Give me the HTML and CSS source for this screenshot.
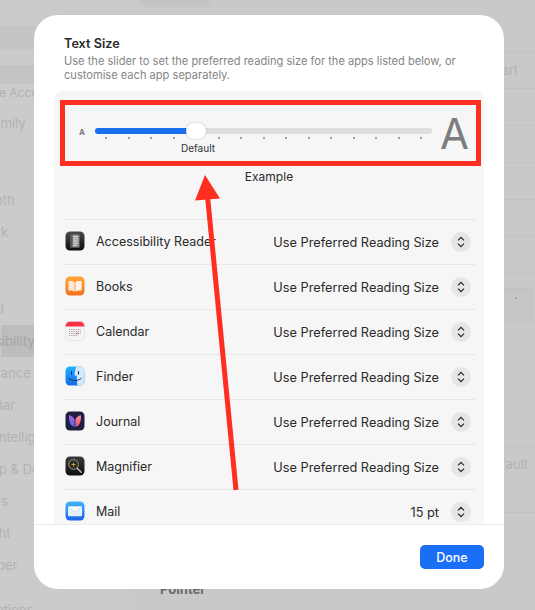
FILE: index.html
```html
<!DOCTYPE html>
<html lang="en">
<head>
<meta charset="utf-8">
<title>Text Size</title>
<link rel="stylesheet" href="styles.css">
</head>
<body>
    <!-- dimmed settings window behind the sheet -->
    <div class="backdrop">
        <div class="sidebar">
            <div class="search"></div>
            <div class="account"></div>
            <div class="account-name">Apple Account</div>
            <div class="family">Family</div>
            <div class="side-item">Wi-Fi</div>
            <div class="side-item">Bluetooth</div>
            <div class="side-item">Network</div>
            <div class="side-item">Battery</div>
            <div class="side-item group-start">General</div>
            <div class="side-item selected">Accessibility</div>
            <div class="side-item">Appearance</div>
            <div class="side-item">Menu Bar</div>
            <div class="side-item">Apple Intelligence</div>
            <div class="side-item">Desktop &amp; Dock</div>
            <div class="side-item">Displays</div>
            <div class="side-item">Spotlight</div>
            <div class="side-item">Wallpaper</div>
            <div class="side-item group-start">Notifications</div>
        </div>
        <div class="main">
            <div class="notch"></div>
            <div class="bg-rows">
                <div class="bg-row"></div>
                <div class="bg-row">Restart</div>
                <div class="bg-row"></div>
                <div class="bg-row"></div>
                <div class="bg-row"></div>
                <div class="bg-row"></div>
                <div class="bg-row"></div>
            </div>
            <div class="bg-band"></div>
            <div class="bg-slider"><span class="bg-dot"></span></div>
            <div class="bg-row-tall">Default</div>
            <div class="bg-heading">Pointer</div>
        </div>
    </div>

    <div class="sheet">
        <div class="sheet-head">
            <h1 class="title">Text Size</h1>
            <p class="desc">Use the slider to set the preferred reading size for the apps listed below, or customise each app separately.</p>
        </div>

        <div class="panel">
            <div class="size-row">
                <span class="a-small">A</span>
                <div class="slider">
                    <div class="track"><div class="fill"></div></div>
                    <div class="knob"></div>
                    <div class="ticks">
                        <i></i><i></i><i></i><i></i><i></i><i></i><i></i><i></i><i></i><i></i><i></i><i></i><i></i><i></i><i></i>
                    </div>
                    <div class="slider-label">Default</div>
                </div>
                <span class="a-big">A</span>
            </div>
            <div class="example">Example</div>

            <div class="app-list">
                <div class="app-row">
                    <svg class="app-icon" viewBox="0 0 20 20">
                        <defs><linearGradient id="readerBg" x1="0" y1="0" x2="0" y2="1"><stop offset="0" stop-color="#4a4a4a"/><stop offset="1" stop-color="#0c0c0c"/></linearGradient></defs>
                        <rect x="0.5" y="0.5" width="19" height="19" rx="4.5" fill="url(#readerBg)"/>
                        <path d="M5.5 3.5h9v13h-9z" fill="#8b8b8b"/>
                        <path d="M5.5 3.5h2v13h-2z" fill="#555"/>
                        <path d="M8 5.5h5M8 7.3h5M8 9.1h5M8 10.9h5M8 12.7h5M8 14.5h3.5" stroke="#e2e2e2" stroke-width="0.9"/>
                    </svg>
                    <span class="app-name">Accessibility Reader</span>
                    <span class="app-value">Use Preferred Reading Size</span>
                    <span class="stepper"><svg viewBox="0 0 20 20"><path d="M7 8.4 10 5.4l3 3M7 11.6l3 3 3-3"/></svg></span>
                </div>
                <div class="app-row">
                    <svg class="app-icon" viewBox="0 0 20 20">
                        <defs><linearGradient id="booksBg" x1="0" y1="0" x2="0" y2="1"><stop offset="0" stop-color="#ffa83a"/><stop offset="1" stop-color="#f5701c"/></linearGradient></defs>
                        <rect x="0.5" y="0.5" width="19" height="19" rx="4.5" fill="url(#booksBg)"/>
                        <path d="M9.6 6.2C8 4.9 5.6 4.8 3.4 5.2v9.4c2.3-.4 4.5-.3 6.2 1z" fill="#ffe9d6"/>
                        <path d="M10.4 6.2c1.6-1.3 4-1.4 6.2-1v9.4c-2.3-.4-4.5-.3-6.2 1z" fill="#fff4ea"/>
                    </svg>
                    <span class="app-name">Books</span>
                    <span class="app-value">Use Preferred Reading Size</span>
                    <span class="stepper"><svg viewBox="0 0 20 20"><path d="M7 8.4 10 5.4l3 3M7 11.6l3 3 3-3"/></svg></span>
                </div>
                <div class="app-row">
                    <svg class="app-icon" viewBox="0 0 20 20">
                        <defs><clipPath id="calClip"><rect x="0.5" y="0.5" width="19" height="19" rx="4.5"/></clipPath></defs>
                        <g clip-path="url(#calClip)">
                            <rect width="20" height="20" fill="#f4f4f4"/>
                            <rect width="20" height="5.5" fill="#fb2f45"/>
                            <path d="M4 8.5h12M4 10.5h12M4 12.5h12M4 14.5h9" stroke="#8a8a8a" stroke-width="0.9" stroke-dasharray="0.9 0.9"/>
                            <rect x="11.5" y="12" width="2" height="1" fill="#f0404c"/>
                        </g>
                        <rect x="0.5" y="0.5" width="19" height="19" rx="4.5" fill="none" stroke="#d8d8d8" stroke-width="0.5"/>
                    </svg>
                    <span class="app-name">Calendar</span>
                    <span class="app-value">Use Preferred Reading Size</span>
                    <span class="stepper"><svg viewBox="0 0 20 20"><path d="M7 8.4 10 5.4l3 3M7 11.6l3 3 3-3"/></svg></span>
                </div>
                <div class="app-row">
                    <svg class="app-icon" viewBox="0 0 20 20">
                        <defs>
                            <linearGradient id="finderBg" x1="0" y1="0" x2="0" y2="1"><stop offset="0" stop-color="#1cb8fb"/><stop offset="1" stop-color="#1467ec"/></linearGradient>
                            <clipPath id="finderClip"><rect x="0.5" y="0.5" width="19" height="19" rx="4.5"/></clipPath>
                        </defs>
                        <g clip-path="url(#finderClip)">
                            <rect width="20" height="20" fill="url(#finderBg)"/>
                            <path d="M11.6 0c-1.2 3-1.9 6-2 9.6h2.2c-.1 3 .1 6.5.6 10.4H20V0z" fill="#d6e9fa"/>
                        </g>
                        <path d="M6.5 5.5v2.6M13.5 5.5v2.6" stroke="#14304f" stroke-width="1.1" stroke-linecap="round"/>
                        <path d="M3.8 12.6c3.5 2.8 8.5 2.8 12.4-.2" fill="none" stroke="#14304f" stroke-width="0.9" stroke-linecap="round"/>
                    </svg>
                    <span class="app-name">Finder</span>
                    <span class="app-value">Use Preferred Reading Size</span>
                    <span class="stepper"><svg viewBox="0 0 20 20"><path d="M7 8.4 10 5.4l3 3M7 11.6l3 3 3-3"/></svg></span>
                </div>
                <div class="app-row">
                    <svg class="app-icon" viewBox="0 0 20 20">
                        <defs>
                            <linearGradient id="journalL" x1="0" y1="0" x2="0" y2="1"><stop offset="0" stop-color="#b45fe0"/><stop offset="1" stop-color="#3f6df0"/></linearGradient>
                            <linearGradient id="journalR" x1="0" y1="0" x2="0" y2="1"><stop offset="0" stop-color="#f59aa0"/><stop offset="1" stop-color="#e84a6a"/></linearGradient>
                        </defs>
                        <rect x="0.5" y="0.5" width="19" height="19" rx="4.5" fill="#1f2040"/>
                        <path d="M9.6 8.5C8.8 6.4 6.6 4.5 4 4.3c-.1 3.5.2 6.8 1.8 9.2 1 1.5 2.8 2.5 3.8 2.2z" fill="url(#journalL)"/>
                        <path d="M10.4 8.5c.8-2.1 3-4 5.6-4.2.1 3.5-.2 6.8-1.8 9.2-1 1.5-2.8 2.5-3.8 2.2z" fill="url(#journalR)"/>
                    </svg>
                    <span class="app-name">Journal</span>
                    <span class="app-value">Use Preferred Reading Size</span>
                    <span class="stepper"><svg viewBox="0 0 20 20"><path d="M7 8.4 10 5.4l3 3M7 11.6l3 3 3-3"/></svg></span>
                </div>
                <div class="app-row">
                    <svg class="app-icon" viewBox="0 0 20 20">
                        <defs><linearGradient id="magBg" x1="0" y1="0" x2="0" y2="1"><stop offset="0" stop-color="#3a3a3a"/><stop offset="1" stop-color="#0e0e0e"/></linearGradient></defs>
                        <rect x="0.5" y="0.5" width="19" height="19" rx="4.5" fill="url(#magBg)"/>
                        <circle cx="8.5" cy="8.5" r="4.8" fill="#2a2a24" stroke="#9a9a9a" stroke-width="1"/>
                        <path d="M8.5 6.5v4M6.5 8.5h4" stroke="#d9a92c" stroke-width="0.9"/>
                        <path d="M12.2 12.2l4 4" stroke="#bdbdbd" stroke-width="1.5" stroke-linecap="round"/>
                    </svg>
                    <span class="app-name">Magnifier</span>
                    <span class="app-value">Use Preferred Reading Size</span>
                    <span class="stepper"><svg viewBox="0 0 20 20"><path d="M7 8.4 10 5.4l3 3M7 11.6l3 3 3-3"/></svg></span>
                </div>
                <div class="app-row">
                    <svg class="app-icon" viewBox="0 0 20 20">
                        <defs><linearGradient id="mailBg" x1="0" y1="0" x2="0" y2="1"><stop offset="0" stop-color="#3fb4fb"/><stop offset="1" stop-color="#1c62ee"/></linearGradient></defs>
                        <rect x="0.5" y="0.5" width="19" height="19" rx="4.5" fill="url(#mailBg)"/>
                        <rect x="3" y="5.2" width="14" height="10" rx="1.2" fill="#e3effc"/>
                        <path d="M3.3 5.8 10 11l6.7-5.2" fill="#fff" stroke="#a9c9f0" stroke-width="0.5"/>
                    </svg>
                    <span class="app-name">Mail</span>
                    <span class="app-value">15 pt</span>
                    <span class="stepper"><svg viewBox="0 0 20 20"><path d="M7 8.4 10 5.4l3 3M7 11.6l3 3 3-3"/></svg></span>
                </div>
            </div>
        </div>

        <div class="sheet-foot">
            <button class="done">Done</button>
        </div>
    </div>

    <!-- red annotation drawn over the screenshot -->
    <div class="mark-box"></div>
    <svg class="mark-arrow" viewBox="0 0 535 610">
        <path d="M236 490 207.5 196" fill="none" stroke="#fe2e20" stroke-width="5"/>
        <path d="M205 175 220 198.5 195 200.5z" fill="#fe2e20"/>
    </svg>
</body>
</html>
```

FILE: styles.css
```css
*{
    box-sizing: border-box;
}
html,body{
    margin: 0;
    height: 100%;
}
body{
    width: 535px;
    height: 610px;
    overflow: hidden;
    position: relative;
    background: #cbcbcb;
    font-family: Inter, "Liberation Sans", sans-serif;
    color: #2a2a2a;
}

/* dimmed window */
.backdrop{
    display: flex;
    height: 610px;
    overflow: hidden;
    font-size: 13px;
    color: #b2b2b2;
}
.sidebar{
    width: 130px;
    flex: none;
    padding-top: 25px;
}
.search{
    height: 25px;
    background: #c5c5c5;
}
.account{
    height: 19px;
    margin-top: 15px;
    background: #c4c4c4;
}
.account-name{
    height: 18px;
    line-height: 18px;
    text-indent: -27px;
    white-space: nowrap;
    font-size: 12px;
}
.family{
    height: 32px;
    line-height: 32px;
    margin-top: 5px;
    text-indent: -14px;
    white-space: nowrap;
}
.side-item{
    height: 32px;
    line-height: 32px;
    margin-left: 1px;
    text-indent: -45px;
    white-space: nowrap;
}
.family + .side-item{
    margin-top: 13px;
}
.group-start{
    margin-top: 13px;
}
.selected{
    background: #bdbdbd;
    color: #a8a8a8;
    font-weight: 500;
}
.main{
    flex: 1;
    position: relative;
    background: #c9c9c9;
    padding-left: 26px;
}
.notch{
    position: absolute;
    left: 10px;
    top: 0;
    width: 70px;
    height: 7px;
    background: #c4c4c4;
    border-radius: 0 0 12px 12px;
}
.bg-rows{
    padding-top: 15px;
}
.bg-row{
    height: 37px;
    line-height: 37px;
    padding-right: 17px;
    text-align: right;
    border-bottom: 1px solid #c2c2c2;
}
.bg-band{
    height: 6px;
    margin-top: 14px;
    margin-right: 1px;
    background: #c3c3c3;
}
.bg-slider{
    height: 30px;
    margin-right: 1px;
    background: #c6c6c6;
    position: relative;
}
.bg-dot{
    position: absolute;
    right: 17px;
    top: 3px;
    width: 2px;
    height: 2px;
    background: #a8a8a8;
}
.bg-row-tall{
    height: 67px;
    margin-top: 122px;
    padding-top: 9px;
    padding-right: 7px;
    text-align: right;
    border-top: 1px solid #c2c2c2;
    border-bottom: 1px solid #c2c2c2;
}
.bg-heading{
    margin-top: 68px;
    margin-left: 4px;
    line-height: 16px;
    font-weight: 700;
    color: #6a6a6a;
}

/* sheet */
.sheet{
    position: absolute;
    left: 34px;
    top: 15px;
    width: 470px;
    height: 574px;
    display: flex;
    flex-direction: column;
    background: #fff;
    border-radius: 24px;
}
.sheet-head{
    padding: 21px 30px 9px;
}
.title{
    margin: 0 0 2px;
    font-size: 12.7px;
    line-height: 16px;
    font-weight: 600;
}
.desc{
    margin: 0;
    font-size: 11.1px;
    line-height: 14px;
    color: #858585;
}
.panel{
    flex: 1;
    min-height: 0;
    margin: 0 20px;
    overflow: hidden;
    background: #f6f6f6;
    border-radius: 8px 8px 0 0;
}
.size-row{
    display: flex;
    align-items: flex-start;
    padding-top: 37px;
}
.a-small{
    width: 41px;
    padding-left: 25px;
    flex: none;
    font-size: 8px;
    line-height: 8px;
    font-weight: 700;
    color: #7d7d7d;
}
.slider{
    width: 337px;
    flex: none;
    position: relative;
}
.track{
    height: 6px;
    background: #dfdfdf;
    border-radius: 3px;
    overflow: hidden;
}
.fill{
    width: 95px;
    height: 6px;
    background: #1a6ef0;
}
.knob{
    position: absolute;
    left: 91px;
    top: -5px;
    width: 20px;
    height: 16px;
    background: #fff;
    border-radius: 8px;
    box-shadow: 0 0 2px rgba(0,0,0,0.25);
}
.ticks{
    display: flex;
    justify-content: space-between;
    margin-top: 3px;
    padding: 0 10px;
}
.ticks i{
    width: 2px;
    height: 2px;
    background: #a0a0a0;
}
.slider-label{
    width: 206px;
    margin-top: 3px;
    font-size: 10px;
    line-height: 12px;
    text-align: center;
    color: #333;
}
.a-big{
    margin-left: 8px;
    font-size: 42px;
    line-height: 6px;
    margin-top: 3px;
    font-weight: 400;
    color: #7d7d7d;
}
.example{
    margin-top: 15px;
    font-size: 12px;
    line-height: 16px;
    text-align: center;
}
.app-list{
    margin: 34px 9px 0 10px;
}
.app-row{
    display: flex;
    align-items: center;
    height: 45px;
    border-top: 1px solid #e6e6e6;
    font-size: 12.5px;
}
.app-icon{
    width: 20px;
    height: 20px;
    margin-left: 1px;
    margin-bottom: 2px;
    flex: none;
}
.app-name{
    margin-left: 11px;
    margin-bottom: 2px;
    flex: 1;
}
.app-value{
    margin-right: 12px;
    font-size: 12.75px;
}
.stepper{
    width: 20px;
    height: 20px;
    margin-right: 4px;
    flex: none;
    border-radius: 50%;
    background: #e6e6e6;
}
.stepper svg{
    display: block;
    width: 20px;
    height: 20px;
    fill: none;
    stroke: #2c2c2c;
    stroke-width: 1.3;
}
.sheet-foot{
    height: 65px;
    flex: none;
    display: flex;
    justify-content: flex-end;
    padding: 20px 20px 0 0;
    border-top: 1px solid #ececec;
}
.done{
    width: 64px;
    height: 24px;
    padding: 0;
    border: none;
    border-radius: 5px;
    background: #1a6ff5;
    color: #fff;
    font-family: inherit;
    font-size: 12.5px;
    font-weight: 500;
}

/* annotation */
.mark-box{
    position: absolute;
    left: 60px;
    top: 100px;
    width: 421px;
    height: 66px;
    border: 5px solid #fe2e20;
}
.mark-arrow{
    position: absolute;
    left: 0;
    top: 0;
    width: 535px;
    height: 610px;
}
```
